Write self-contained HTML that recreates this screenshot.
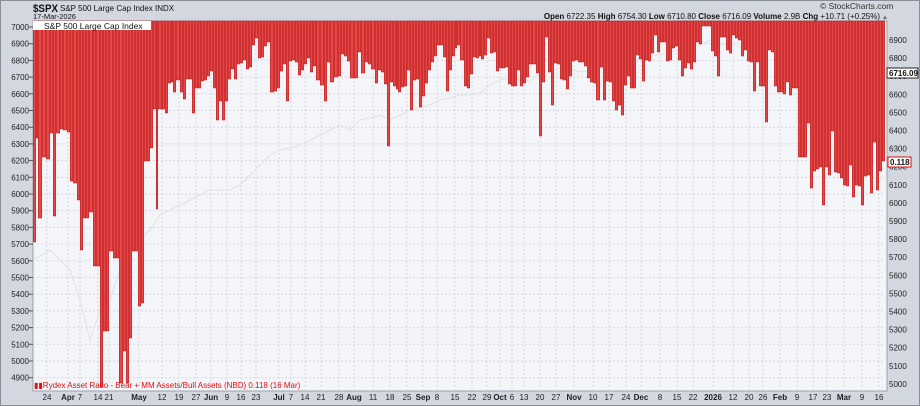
<!DOCTYPE html>
<html><head><meta charset="utf-8"><style>
html,body{margin:0;padding:0;background:#d3d7e0;}
body{width:920px;height:406px;overflow:hidden;position:relative;font-family:"Liberation Sans",sans-serif;}
</style></head><body>
<svg id="s" width="920" height="406" xmlns="http://www.w3.org/2000/svg" style="position:absolute;left:0;top:0">
<rect x="0.5" y="0.5" width="919" height="405" fill="#d3d7e0" stroke="#8a8e98"/>
<rect x="33" y="21" width="854" height="370" fill="#f4f5f9" stroke="#9ca0aa" stroke-width="1"/>
<g id="grid" stroke="#d6d8df" stroke-dasharray="2,2" stroke-width="1"></g>
<polyline fill="none" stroke="#e2e2e2" stroke-width="1" points="33,260 50,250 62,262 70,270 80,300 90,340 100,310 110,300 120,270 130,255 140,240 150,230 160,215 170,210 180,205 190,200 200,195 210,190 220,190 230,190 240,185 250,175 260,165 270,155 280,150 290,148 300,145 310,140 320,135 330,130 340,125 350,130 360,120 370,118 380,115 390,120 400,115 410,110 420,108 430,105 440,100 450,98 460,95 470,95 480,93 490,85 500,80 510,78 520,80 530,82 540,72 550,70 560,68 570,70 580,72 590,70 600,68 610,66 620,62 630,60 640,58 650,55 660,55 670,52 680,50 690,48 700,45 710,40 720,45 730,42 740,48 750,45 760,50 770,46 780,50 790,55 800,60 810,65 820,55 830,60 840,62 850,60 860,65 870,62 885,70"/>
<g id="bars" fill="#e64848" stroke="#b41a1a" stroke-width="0.5"></g>
<g id="ax" font-size="8" fill="#222"></g>
<rect x="33" y="21" width="118" height="9" fill="#fff"/>
<text x="44" y="29" font-size="8.5" fill="#111">S&amp;P 500 Large Cap Index</text>
<text x="33" y="12" font-size="11" font-weight="bold" fill="#111" textLength="25" lengthAdjust="spacingAndGlyphs">$SPX</text>
<text x="60" y="11" font-size="8" fill="#111">S&amp;P 500 Large Cap Index  INDX</text>
<text x="33" y="19" font-size="7.5" fill="#111">17-Mar-2026</text>
<text x="820" y="9" font-size="8.5" fill="#333">© StockCharts.com</text>
<text x="880" y="19" font-size="8" fill="#111" text-anchor="end"><tspan font-weight="bold">Open</tspan> 6722.35  <tspan font-weight="bold">High</tspan> 6754.30  <tspan font-weight="bold">Low</tspan> 6710.80  <tspan font-weight="bold">Close</tspan> 6716.09  <tspan font-weight="bold">Volume</tspan> 2.9B  <tspan font-weight="bold">Chg</tspan> +10.71 (+0.25%)</text>
<text x="882" y="19" font-size="6" fill="#666">▲</text>
<text x="34" y="388" font-size="8" fill="#d11">▮▮Rydex Asset Ratio - Bear + MM Assets/Bull Assets (NBD) 0.118 (16 Mar)</text>
<rect x="887" y="68" width="31" height="10" fill="#fff" stroke="#222"/>
<text x="889" y="76" font-size="8" font-weight="bold" fill="#111">6716.09</text>
<rect x="888" y="157" width="23" height="10" fill="#fff" stroke="#d11"/>
<text x="890" y="165" font-size="8" font-weight="bold" fill="#111">0.118</text>
</svg>
<script>
var ns="http://www.w3.org/2000/svg";
function el(p,t,a,txt){var e=document.createElementNS(ns,t);for(var k in a)e.setAttribute(k,a[k]);if(txt)e.textContent=txt;p.appendChild(e);return e;}
var d=[[33,242],[36,138],[38,218],[42,157],[46,159],[50,133],[53,216],[56,133],[60,129],[63,130],[67,132],[70,181],[73,183],[77,200],[80,250],[83,218],[86,218],[89,212],[93,266],[96,266],[100,387],[103,331],[106,331],[109,251],[113,258],[116,258],[119,383],[123,351],[126,383],[129,338],[132,251],[135,251],[138,306],[141,303],[144,161],[147,161],[150,148],[153,109],[156,209],[158,109],[162,109],[165,113],[168,83],[171,82],[173,92],[176,80],[180,92],[183,99],[186,79],[189,79],[192,113],[195,88],[198,88],[201,81],[204,80],[207,76],[210,71],[213,88],[216,120],[219,101],[222,120],[225,101],[228,79],[231,69],[234,79],[237,64],[240,63],[243,60],[246,69],[249,67],[252,45],[255,38],[258,58],[261,57],[264,46],[267,42],[270,92],[274,91],[277,88],[280,71],[283,64],[286,101],[289,61],[292,60],[295,62],[298,75],[301,70],[304,64],[307,58],[310,72],[313,66],[316,80],
[320,85],[324,101],[327,62],[330,82],[334,77],[338,76],[341,54],[344,56],[347,61],[350,78],[354,78],[358,52],[361,73],[365,62],[368,64],[371,69],[375,83],[378,70],[381,72],[384,84],[387,146],[390,82],[393,86],[396,89],[398,92],[401,87],[404,86],[407,70],[410,110],[413,80],[416,79],[419,107],[422,96],[425,83],[428,70],[431,62],[434,56],[437,45],[440,45],[443,57],[446,91],[449,70],[452,56],[455,48],[457,45],[460,60],[464,86],[467,88],[470,74],[473,57],[476,58],[479,56],[481,59],[484,55],[487,38],[490,53],[493,52],[496,71],[499,68],[502,68],[505,67],[508,84],[511,86],[514,86],[517,70],[520,86],[523,83],[526,77],[529,64],[532,64],[536,73],[539,136],[542,82],[545,37],[548,72],[551,105],[554,63],[557,64],[560,79],[563,80],[566,89],[569,76],[572,61],[575,60],[578,62],[581,62],[584,66],[587,78],[590,82],[593,83],[596,100],
[600,67],[603,100],[606,81],[609,82],[612,101],[615,110],[618,105],[621,115],[624,85],[627,76],[630,88],[633,88],[636,55],[639,59],[642,81],[645,60],[648,61],[651,53],[654,35],[657,52],[660,42],[663,42],[666,61],[669,60],[672,48],[675,46],[678,60],[681,76],[684,68],[687,63],[690,69],[693,62],[696,42],[699,44],[702,26],[705,26],[708,26],[711,51],[714,56],[717,76],[720,37],[723,37],[726,50],[729,53],[732,35],[735,38],[738,40],[741,56],[744,50],[747,61],[750,62],[753,91],[756,62],[759,86],[762,86],[765,122],[768,50],[771,52],[774,86],[777,92],[780,92],[783,94],[786,82],[789,95],[792,88],[795,88],[798,157],[801,157],[804,157],[807,123],[810,188],[813,171],[816,169],[819,167],[822,205],[825,167],[828,175],[831,131],[834,172],[837,173],[840,178],[843,185],[846,186],[849,165],[852,197],[855,185],[858,186],[861,205],[864,176],[867,175],[870,193],[873,142],[876,190],[879,171],[882,161],[885,0]];
var g=document.getElementById("grid"),b=document.getElementById("bars"),ax=document.getElementById("ax");
for(var i=0;i<=21;i++){var y=27+i*16.7;el(g,"line",{x1:33,x2:885,y1:y,y2:y});el(ax,"text",{x:29,y:y+3,"text-anchor":"end"},String(7000-i*100));el(ax,"line",{x1:29,x2:33,y1:y,y2:y,stroke:"#555"});}
for(var i=0;i<=19;i++){var y=40+i*18.1;el(ax,"text",{x:889,y:y+3},String(6900-i*100));}
var L=[[47,"24"],[68,"Apr",1],[80,"7"],[98,"14"],[109,"21"],[139,"May",1],[162,"12"],[179,"19"],[196,"27"],[211,"Jun",1],[227,"9"],[241,"16"],[256,"23"],[279,"Jul",1],[291,"7"],[305,"14"],[321,"21"],[339,"28"],[354,"Aug",1],[373,"11"],[390,"18"],[407,"25"],[423,"Sep",1],[437,"8"],[455,"15"],[472,"22"],[487,"29"],[500,"Oct",1],[512,"6"],[524,"13"],[540,"20"],[556,"27"],[574,"Nov",1],[593,"10"],[609,"17"],[626,"24"],[641,"Dec",1],[660,"8"],[677,"15"],[693,"22"],[713,"2026",1],[733,"12"],[749,"20"],[763,"26"],[780,"Feb",1],[797,"9"],[813,"17"],[827,"23"],[844,"Mar",1],[862,"9"],[879,"16"]];
L.forEach(function(l){el(g,"line",{x1:l[0],x2:l[0],y1:21,y2:391});var t=el(ax,"text",{x:l[0],y:400,"text-anchor":"middle"},l[1]);if(l[2])t.setAttribute("font-weight","bold");});
for(var i=0;i<d.length-1;i++){var x=d[i][0],w=d[i+1][0]-x,h=Math.min(d[i][1],390)-21;el(b,"rect",{x:x+0.25,y:21,width:w-0.5,height:h});}
</script>
</body></html>
